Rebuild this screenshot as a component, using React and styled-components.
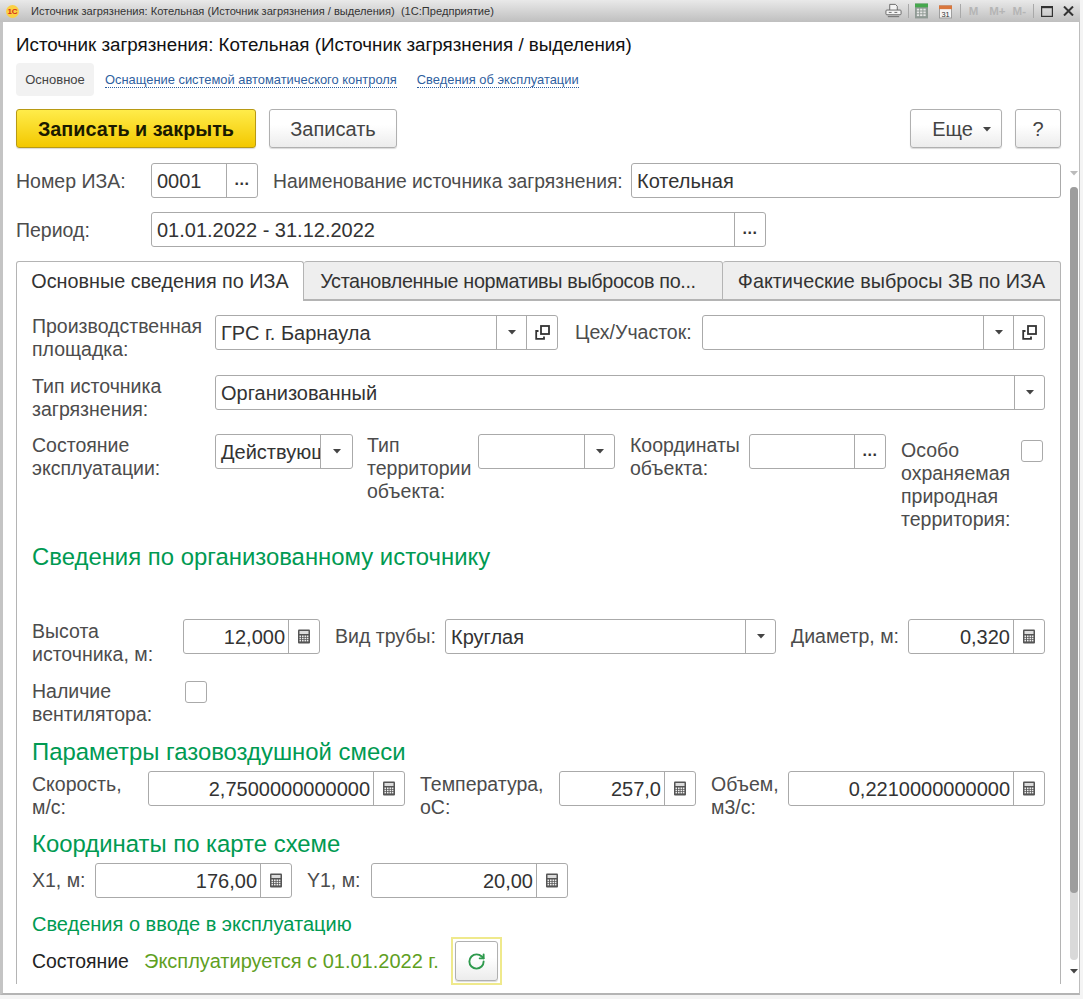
import React from 'react';
import styled, { createGlobalStyle } from 'styled-components';
import { RotateCw } from 'lucide-react';

const GlobalStyle = createGlobalStyle`
  html, body {
    margin: 0;
    padding: 0;
    background: #f4f4f4;
    font-family: "Liberation Sans", Arial, sans-serif;
  }
`;

const Window = styled.div`
  width: 1080px;
  height: 995px;
  box-sizing: border-box;
  background: #fff;
  border-left: 3px solid #c4c4c4;
  border-right: 1px solid #bdbdbd;
  border-bottom: 2px solid #b4b4b4;
`;

const TitleBar = styled.div`
  height: 22px;
  margin-left: -3px;
  margin-right: -1px;
  padding-left: 6px;
  padding-right: 6px;
  display: flex;
  align-items: center;
  background: linear-gradient(#e9e9e9, #bfbfbf);
`;

const Logo = styled.span`
  width: 13px;
  height: 13px;
  border-radius: 50%;
  background: #fbd043;
  color: #d5301c;
  font-size: 8px;
  font-weight: 700;
  line-height: 13px;
  text-align: center;
  flex: none;
`;

const TitleText = styled.span`
  margin-left: 12px;
  font-size: 11.1px;
  color: #333;
  white-space: pre;
`;

const TitleTools = styled.div`
  margin-left: auto;
  display: flex;
  align-items: center;
  height: 22px;
`;

const ToolSep = styled.span`
  width: 1px;
  height: 14px;
  margin: 0 ${p => p.$gap || 6}px;
  background: #a9a9a9;
`;

const ToolGap = styled.span`
  width: ${p => p.$w}px;
`;

const MemoKey = styled.span`
  font-size: 11.5px;
  font-weight: 700;
  color: #b5b5b5;
  margin-right: ${p => p.$mr || 0}px;
`;

const Header = styled.div`
  padding-left: 13px;
  padding-right: 18px;
`;

const PageTitle = styled.h1`
  margin: 0;
  padding-top: 12px;
  height: 29px;
  font-size: 18.8px;
  line-height: 22px;
  font-weight: 400;
  color: #111;
`;

const SubNav = styled.div`
  display: flex;
  align-items: center;
  height: 33px;
  margin-top: 0;
`;

const ActiveSection = styled.span`
  width: 78px;
  height: 33px;
  line-height: 34px;
  text-align: center;
  background: #f2f2f2;
  border-radius: 4px;
  font-size: 13px;
  color: #444;
`;

const SectionLink = styled.a`
  margin-left: ${p => p.$ml}px;
  margin-top: 2px;
  font-size: 12.9px;
  color: #2f5f9f;
  border-bottom: 1px dotted #2f5f9f;
  line-height: 14px;
`;

const ActionBar = styled.div`
  display: flex;
  margin-top: 13px;
  height: 39px;
`;

const Button = styled.button`
  box-sizing: border-box;
  width: ${p => p.$w}px;
  margin-left: ${p => p.$ml || 0}px;
  height: 39px;
  padding: 1px 0 0 ${p => p.$pl || 0}px;
  border: 1px solid #b0b0b0;
  border-radius: 3px;
  background: linear-gradient(#fff 40%, #ececec);
  box-shadow: 0 1px 1px rgba(0, 0, 0, 0.15);
  font-family: inherit;
  font-size: 20px;
  color: #444;
  display: flex;
  align-items: center;
  justify-content: center;
  gap: 10px;
`;

const PrimaryButton = styled(Button)`
  border-color: #b89a14;
  background: linear-gradient(#ffec4a, #f3c800);
  font-size: 19.8px;
  font-weight: 700;
  color: #1a1a00;
`;

const ScrollArea = styled.div`
  display: flex;
  margin-top: 15px;
`;

const Form = styled.div`
  width: 1045px;
  margin-left: 13px;
`;

const Row = styled.div`
  display: flex;
  align-items: flex-start;
  margin-top: ${p => p.$mt || 0}px;
`;

const Label = styled.div`
  box-sizing: border-box;
  width: ${p => p.$w}px;
  margin-left: ${p => p.$ml || 0}px;
  flex: none;
  padding-top: ${p => p.$pt ?? 6}px;
  font-size: ${p => p.$size || 19.5}px;
  line-height: 23px;
  color: #4c4c4c;
`;

const Field = styled.div`
  box-sizing: border-box;
  display: flex;
  flex: none;
  width: ${p => p.$w}px;
  height: 35px;
  border: 1px solid #aaa;
  border-radius: 3px;
  background: #fff;
`;

const Value = styled.div`
  flex: 1;
  min-width: 0;
  overflow: hidden;
  white-space: nowrap;
  padding: 0 ${p => (p.$right ? 3 : 0)}px 0 5px;
  text-align: ${p => (p.$right ? 'right' : 'left')};
  font-size: 20px;
  line-height: 35px;
  color: #333;
`;

const FieldButton = styled.div`
  box-sizing: border-box;
  width: ${p => p.$w || 31}px;
  flex: none;
  border-left: 1px solid #aaa;
  display: flex;
  align-items: center;
  justify-content: center;
  font-size: 16px;
  font-weight: 700;
  color: #333;
`;

const Dots = styled.span`
  letter-spacing: 0.5px;
  margin-top: -1px;
`;

const Checkbox = styled.div`
  box-sizing: border-box;
  width: 22px;
  height: 22px;
  flex: none;
  margin-top: ${p => p.$mt}px;
  border: 1px solid #aaa;
  border-radius: 3px;
`;

const Tabs = styled.div`
  display: flex;
  margin-top: 14px;
  height: 39px;
`;

const Tab = styled.div`
  box-sizing: border-box;
  width: ${p => p.$w}px;
  height: ${p => (p.$active ? 40 : 39)}px;
  padding-right: ${p => p.$pr || 0}px;
  line-height: 39px;
  text-align: center;
  font-size: 19.8px;
  letter-spacing: ${p => p.$ls || 0}px;
  white-space: nowrap;
  position: relative;
  z-index: ${p => (p.$active ? 1 : 0)};
  color: #333;
  background: ${p => (p.$active ? '#fff' : '#eeeeee')};
  border: 1px solid #b4b4b4;
  border-left-width: ${p => (p.$first ? 1 : 0)}px;
  border-bottom: ${p => (p.$active ? 'none' : '1px solid #b4b4b4')};
  border-radius: 3px 3px 0 0;
`;

const Panel = styled.div`
  box-sizing: border-box;
  height: 684px;
  padding: 14px 15px 0;
  border: 1px solid #b4b4b4;
  border-bottom: none;
`;

const SectionTitle = styled.div`
  margin-top: ${p => p.$mt}px;
  font-size: 23.9px;
  line-height: 26px;
  color: #009a52;
`;

const SmallTitle = styled.div`
  margin-top: 15px;
  font-size: 20px;
  line-height: 22px;
  color: #009a52;
`;

const StatusName = styled.span`
  width: 112px;
  font-size: 19.4px;
  line-height: 48px;
  color: #222;
`;

const StatusValue = styled.span`
  width: 307px;
  font-size: 20px;
  line-height: 48px;
  color: #5f9f1f;
`;

const RefreshFocus = styled.div`
  box-sizing: border-box;
  width: 51px;
  height: 48px;
  padding: 2px;
  border: 2px solid #efe98c;
`;

const RefreshButton = styled(Button)`
  width: 100%;
  height: 100%;
  color: #2f9a4d;
`;

const Scrollbar = styled.div`
  width: 9px;
  margin-left: 8px;
  margin-top: 8px;
  display: flex;
  flex-direction: column;
  align-items: center;
`;

const ScrollTrack = styled.div`
  width: 8px;
  height: 773px;
  margin-top: 11px;
  border-radius: 4px;
  background: #d9d9d9;
`;

const ScrollThumb = styled.div`
  height: 706px;
  border-radius: 4px;
  background: #9d9d9d;
`;

const ScrollDown = styled.div`
  margin-top: 9px;
  line-height: 0;
`;

const Arrow = ({ color = '#444' }) => (
  <svg width="8" height="5" viewBox="0 0 8 5"><path d="M0 0h8L4 4.6z" fill={color} /></svg>
);

const OpenIcon = () => (
  <svg width="15" height="15" viewBox="0 0 15 15" fill="none" stroke="#333" strokeWidth="1.8">
    <rect x="6" y="1" width="8" height="8" />
    <path d="M3.5 6H1.2v7.8H9v-2.3" />
  </svg>
);

const CalcIcon = () => (
  <svg width="14" height="15" viewBox="0 0 13 15">
    <rect x="0.5" y="0.5" width="12" height="14" rx="1" fill="#555" />
    <rect x="2" y="2" width="9" height="3" fill="#ddd" />
    {[6.5, 8.7, 10.9].map(y => [2, 4.5, 7, 9.3].map(x => (
      <rect key={`${x}-${y}`} x={x} y={y} width="1.6" height="1.5" fill="#eee" />
    )))}
  </svg>
);

const PrintIcon = () => (
  <svg width="17" height="16" viewBox="0 0 18 16" fill="#f4f4f4" stroke="#666">
    <path d="M5 7V1h6l2 2v4" />
    <rect x="1" y="7" width="16" height="5" rx="1" />
    <path d="M3 14h12M4 9.5h3M10 9.5h3" fill="none" />
  </svg>
);

const GridIcon = () => (
  <svg width="13" height="16" viewBox="0 0 14 16">
    <rect width="14" height="16" fill="#8f9a94" />
    <rect width="14" height="4" fill="#46a84e" />
    {[5.5, 8.5, 11.5].map(y => [2, 5.5, 9].map(x => (
      <rect key={`${x}-${y}`} x={x} y={y} width="2.5" height="2" fill="#e6e6e6" />
    )))}
  </svg>
);

const DateIcon = () => (
  <svg width="13" height="16" viewBox="0 0 14 16">
    <rect x="0.5" y="2.5" width="13" height="13" fill="#f5f5f5" stroke="#999" />
    <rect x="0" y="2" width="14" height="4" fill="#d9763c" />
    <text x="7" y="14" textAnchor="middle" fontSize="8" fill="#333" fontFamily="Liberation Sans">31</text>
  </svg>
);

const MaxIcon = () => (
  <svg width="12" height="11" viewBox="0 0 12 11" fill="none" stroke="#333" strokeWidth="1.2">
    <rect x="0.6" y="0.6" width="10.8" height="9.8" />
    <path d="M0.6 1.6h10.8" />
  </svg>
);

const CloseIcon = () => (
  <svg width="11" height="10" viewBox="0 0 11 10" stroke="#333" strokeWidth="2">
    <path d="M1 0.5l9 9M10 0.5l-9 9" />
  </svg>
);

const Select = ({ w, value, open, btn }) => (
  <Field $w={w}>
    <Value>{value}</Value>
    <FieldButton $w={btn || 30}><Arrow /></FieldButton>
    {open && <FieldButton><OpenIcon /></FieldButton>}
  </Field>
);

const Picker = ({ w, value }) => (
  <Field $w={w}>
    <Value>{value}</Value>
    <FieldButton><Dots>...</Dots></FieldButton>
  </Field>
);

const NumberField = ({ w, value }) => (
  <Field $w={w}>
    <Value $right>{value}</Value>
    <FieldButton><CalcIcon /></FieldButton>
  </Field>
);

const App = () => (
  <>
    <GlobalStyle />
    <Window>
      <TitleBar>
        <Logo>1С</Logo>
        <TitleText>Источник загрязнения: Котельная (Источник загрязнения / выделения)  (1С:Предприятие)</TitleText>
        <TitleTools>
          <PrintIcon />
          <ToolSep $gap={6} />
          <GridIcon />
          <ToolGap $w={11} />
          <DateIcon />
          <ToolSep $gap={8} />
          <MemoKey $mr={11}>M</MemoKey>
          <MemoKey $mr={7}>M+</MemoKey>
          <MemoKey>M-</MemoKey>
          <ToolSep $gap={7} />
          <MaxIcon />
          <ToolGap $w={10} />
          <CloseIcon />
        </TitleTools>
      </TitleBar>

      <Header>
        <PageTitle>Источник загрязнения: Котельная (Источник загрязнения / выделения)</PageTitle>
        <SubNav>
          <ActiveSection>Основное</ActiveSection>
          <SectionLink $ml={11}>Оснащение системой автоматического контроля</SectionLink>
          <SectionLink $ml={20}>Сведения об эксплуатации</SectionLink>
        </SubNav>
        <ActionBar>
          <PrimaryButton $w={240}>Записать и закрыть</PrimaryButton>
          <Button $w={128} $ml={13}>Записать</Button>
          <Button $w={92} $ml={513} $pl={11}>Еще <Arrow /></Button>
          <Button $w={46} $ml={13}>?</Button>
        </ActionBar>
      </Header>

      <ScrollArea>
        <Form>
          <Row>
            <Label $w={135} $pt={7}>Номер ИЗА:</Label>
            <Picker w={107} value="0001" />
            <Label $w={358} $ml={15} $pt={7} $size={19.3}>Наименование источника загрязнения:</Label>
            <Field $w={430}><Value>Котельная</Value></Field>
          </Row>
          <Row $mt={14}>
            <Label $w={135} $pt={7}>Период:</Label>
            <Picker w={615} value="01.01.2022 - 31.12.2022" />
          </Row>

          <Tabs>
            <Tab $w={288} $active $first>Основные сведения по ИЗА</Tab>
            <Tab $w={419} $ls={-0.35} $pr={10}>Установленные нормативы выбросов по...</Tab>
            <Tab $w={338}>Фактические выбросы ЗВ по ИЗА</Tab>
          </Tabs>
          <Panel>
            <Row>
              <Label $w={183} $pt={0}>Производственная площадка:</Label>
              <Select w={343} value="ГРС г. Барнаула" open />
              <Label $w={127} $ml={17}>Цех/Участок:</Label>
              <Select w={343} value="" open />
            </Row>
            <Row $mt={14}>
              <Label $w={183} $pt={0}>Тип источника загрязнения:</Label>
              <Select w={830} value="Организованный" />
            </Row>
            <Row $mt={13}>
              <Label $w={183} $pt={0}>Состояние эксплуатации:</Label>
              <Select w={138} value="Действующее" btn={32} />
              <Label $w={111} $ml={14} $pt={0}>Тип территории объекта:</Label>
              <Select w={137} value="" />
              <Label $w={119} $ml={15} $pt={0}>Координаты объекта:</Label>
              <Picker w={137} value="" />
              <Label $w={120} $ml={15} $pt={5}>Особо охраняемая природная территория:</Label>
              <Checkbox $mt={6} />
            </Row>

            <SectionTitle $mt={13}>Сведения по организованному источнику</SectionTitle>

            <Row $mt={49}>
              <Label $w={151} $pt={1}>Высота источника, м:</Label>
              <NumberField w={137} value="12,000" />
              <Label $w={110} $ml={15}>Вид трубы:</Label>
              <Select w={331} value="Круглая" />
              <Label $w={117} $ml={15}>Диаметр, м:</Label>
              <NumberField w={137} value="0,320" />
            </Row>
            <Row $mt={14}>
              <Label $w={153} $pt={0}>Наличие вентилятора:</Label>
              <Checkbox $mt={1} />
            </Row>

            <SectionTitle $mt={13}>Параметры газовоздушной смеси</SectionTitle>

            <Row $mt={6}>
              <Label $w={116} $pt={2}>Скорость,<br />м/с:</Label>
              <NumberField w={257} value="2,7500000000000" />
              <Label $w={139} $ml={15} $pt={2}>Температура,<br />оС:</Label>
              <NumberField w={137} value="257,0" />
              <Label $w={77} $ml={15} $pt={2}>Объем,<br />м3/с:</Label>
              <NumberField w={257} value="0,2210000000000" />
            </Row>

            <SectionTitle $mt={12}>Координаты по карте схеме</SectionTitle>

            <Row $mt={6}>
              <Label $w={63}>X1, м:</Label>
              <NumberField w={197} value="176,00" />
              <Label $w={64} $ml={15}>Y1, м:</Label>
              <NumberField w={197} value="20,00" />
            </Row>

            <SmallTitle>Сведения о вводе в эксплуатацию</SmallTitle>
            <Row $mt={2}>
              <StatusName>Состояние</StatusName>
              <StatusValue>Эксплуатируется с 01.01.2022 г.</StatusValue>
              <RefreshFocus>
                <RefreshButton><RotateCw size={19} strokeWidth={2.4} /></RefreshButton>
              </RefreshFocus>
            </Row>
          </Panel>
        </Form>
        <Scrollbar>
          <Arrow color="#bbb" />
          <ScrollTrack><ScrollThumb /></ScrollTrack>
          <ScrollDown><Arrow /></ScrollDown>
        </Scrollbar>
      </ScrollArea>
    </Window>
  </>
);

export default App;
